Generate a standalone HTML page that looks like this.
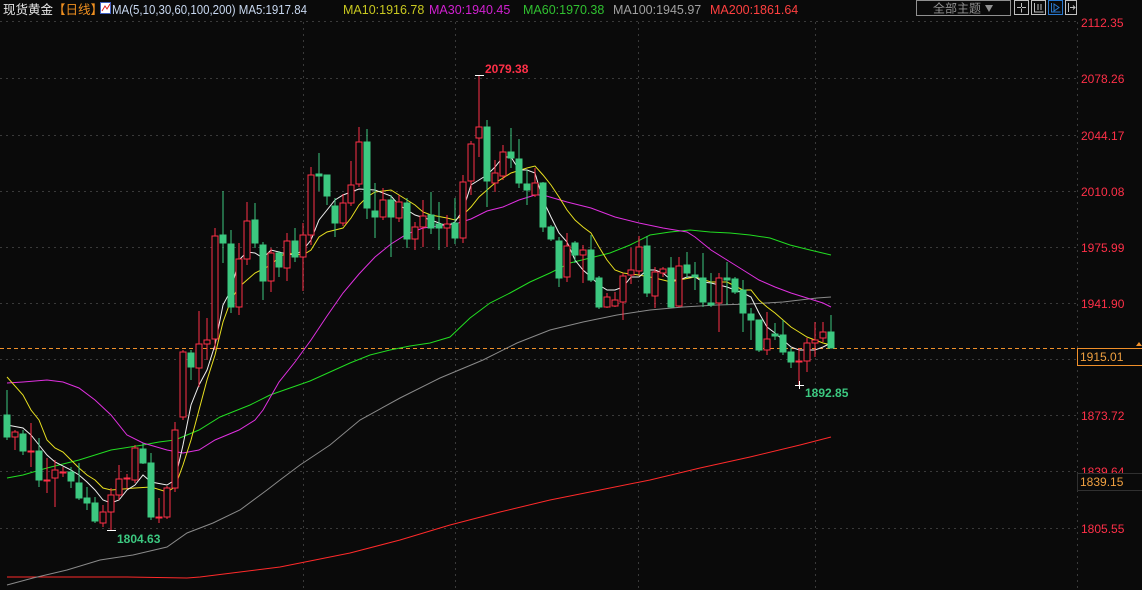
<!DOCTYPE html>
<html><head><meta charset="utf-8"><style>
html,body{margin:0;padding:0;background:#0a0a0a;width:1142px;height:590px;overflow:hidden}
svg{position:absolute;left:0;top:0}
text{font-family:"Liberation Sans","Noto Sans CJK SC",sans-serif}
</style></head><body>
<svg width="1142" height="590" viewBox="0 0 1142 590" xmlns="http://www.w3.org/2000/svg">
<rect width="1142" height="590" fill="#0a0a0a"/>
<g stroke="#3a3a3a" stroke-width="1" stroke-dasharray="2,4">
<line x1="0" y1="21.5" x2="1077" y2="21.5"/>
<line x1="0" y1="78.5" x2="1077" y2="78.5"/>
<line x1="0" y1="135.5" x2="1077" y2="135.5"/>
<line x1="0" y1="191.5" x2="1077" y2="191.5"/>
<line x1="0" y1="247.5" x2="1077" y2="247.5"/>
<line x1="0" y1="303.5" x2="1077" y2="303.5"/>
<line x1="0" y1="359.5" x2="1077" y2="359.5"/>
<line x1="0" y1="415.5" x2="1077" y2="415.5"/>
<line x1="0" y1="471.5" x2="1077" y2="471.5"/>
<line x1="0" y1="528.5" x2="1077" y2="528.5"/>
<line x1="303.5" y1="22" x2="303.5" y2="590"/>
<line x1="455.5" y1="22" x2="455.5" y2="590"/>
<line x1="638.5" y1="22" x2="638.5" y2="590"/>
<line x1="815.5" y1="22" x2="815.5" y2="590"/>
<line x1="1077.5" y1="22" x2="1077.5" y2="590"/>
</g>
<line x1="0" y1="348.5" x2="1077" y2="348.5" stroke="#f0902a" stroke-width="1" stroke-dasharray="4,3"/>
<g fill="none" stroke-width="1">
<polyline stroke="#ff2a2a" points="7,577 125,577 187,578 200,577 240,572 280,567 300,563 350,553 400,540 450,525 500,512 550,500 600,490 650,480 700,468 750,457 800,445 831,437"/>
<polyline stroke="#8a8a8a" points="7,585 33,578 67,570 100,560 133,555 167,547 187,533 213,523 240,510 267,490 280,480 300,465 330,445 360,420 400,398 440,378 483,360 517,343 550,330 583,322 617,315 650,310 683,307 717,305 750,304 783,302 817,298 831,297"/>
<polyline stroke="#22dd22" points="7,478 23,475 47,468 79,460 111,450 143,445 159,442 175,440 199,430 220,417 250,405 270,395 290,388 310,381 330,372 350,363 370,355 390,350 410,346 430,343 450,337 470,318 490,303 510,293 530,282 550,273 570,263 590,258 610,253 630,245 650,235 670,232 690,230 710,232 730,233 750,235 770,238 790,245 810,250 831,255"/>
<polyline stroke="#e030e0" points="7,383 23,382 47,380 63,382 79,388 95,400 111,415 127,435 143,443 167,450 183,453 199,450 215,440 239,430 255,420 263,410 279,382 295,362 311,340 327,316 343,293 359,274 375,257 391,244 407,234 423,228 439,226 455,224 471,219 487,211 503,207 519,200 535,195 543,195 567,202 591,208 615,217 639,223 663,228 687,232 695,237 711,250 727,260 743,270 759,280 775,287 791,293 807,298 823,303 831,307"/>
<polyline stroke="#e8e020" points="7,377 23,395 31,410 39,420 47,440 55,448 63,452 71,460 79,468 87,475 95,480 103,488 111,490 135,488 151,487 167,492 175,487 183,465 191,440 199,410 207,380 215,355 223,322 231,300 239,287 247,280 255,273 271,265 279,257 287,253 303,255 311,250 319,237 327,232 343,228 351,218 359,205 367,197 375,192 391,190 399,195 407,200 415,205 423,212 431,215 447,218 455,220 463,215 471,207 479,197 487,190 495,183 511,173 527,168 535,166 543,175 551,185 559,197 567,210 575,220 583,227 591,233 599,247 607,260 615,270 623,273 639,275 655,278 671,282 679,280 695,277 711,282 727,282 743,290 751,290 759,300 767,307 775,313 783,320 791,327 799,332 807,337 815,340 823,343 831,345"/>
<polyline stroke="#f0f0f0" points="7,425 23,428 31,435 39,445 47,455 55,462 71,470 79,475 87,482 95,490 103,500 111,503 119,500 127,490 135,485 143,475 151,482 167,485 175,480 183,445 191,405 199,385 207,370 215,345 223,305 231,290 239,260 247,252 255,253 263,258 271,250 287,254 295,255 303,250 311,240 319,220 327,210 335,200 343,195 359,189 375,190 391,196 399,205 407,210 415,215 431,220 447,226 455,222 463,210 471,185 479,180 487,175 495,167 503,157 511,157 519,170 527,170 535,173 543,200 551,217 559,233 567,242 575,260 583,270 591,277 599,285 607,290 615,290 623,287 631,277 639,277 647,270 655,270 663,273 671,280 679,280 687,277 695,277 703,282 711,283 719,285 727,287 735,290 743,293 751,297 759,313 767,327 775,333 783,340 791,347 799,350 815,350 823,347 831,343"/>
</g>
<g stroke="#ff3048" fill="#0a0a0a" stroke-width="1" shape-rendering="crispEdges">
<line x1="15" y1="430" x2="15" y2="450"/><rect x="12" y="432" width="6" height="5"/>
<line x1="31" y1="423" x2="31" y2="467"/><rect x="28" y="451" width="6" height="1"/>
<line x1="47" y1="458" x2="47" y2="493"/><rect x="44" y="480" width="6" height="1"/>
<line x1="55" y1="460" x2="55" y2="507"/><rect x="52" y="470" width="6" height="8"/>
<line x1="63" y1="467" x2="63" y2="477"/><rect x="60" y="472" width="6" height="1"/>
<line x1="103" y1="505" x2="103" y2="527"/><rect x="100" y="512" width="6" height="11"/>
<line x1="111" y1="488" x2="111" y2="530"/><rect x="108" y="495" width="6" height="17"/>
<line x1="119" y1="465" x2="119" y2="500"/><rect x="116" y="479" width="6" height="16"/>
<line x1="127" y1="474" x2="127" y2="489"/><rect x="124" y="478" width="6" height="1"/>
<line x1="135" y1="445" x2="135" y2="483"/><rect x="132" y="448" width="6" height="32"/>
<line x1="159" y1="498" x2="159" y2="523"/><rect x="156" y="517" width="6" height="1"/>
<line x1="167" y1="486" x2="167" y2="519"/><rect x="164" y="488" width="6" height="29"/>
<line x1="175" y1="422" x2="175" y2="492"/><rect x="172" y="430" width="6" height="58"/>
<line x1="183" y1="350" x2="183" y2="420"/><rect x="180" y="352" width="6" height="65"/>
<line x1="199" y1="311" x2="199" y2="387"/><rect x="196" y="344" width="6" height="24"/>
<line x1="207" y1="318" x2="207" y2="360"/><rect x="204" y="340" width="6" height="4"/>
<line x1="215" y1="228" x2="215" y2="350"/><rect x="212" y="236" width="6" height="103"/>
<line x1="239" y1="243" x2="239" y2="315"/><rect x="236" y="259" width="6" height="48"/>
<line x1="247" y1="202" x2="247" y2="265"/><rect x="244" y="221" width="6" height="38"/>
<line x1="271" y1="248" x2="271" y2="292"/><rect x="268" y="253" width="6" height="28"/>
<line x1="287" y1="233" x2="287" y2="281"/><rect x="284" y="241" width="6" height="27"/>
<line x1="303" y1="223" x2="303" y2="291"/><rect x="300" y="235" width="6" height="22"/>
<line x1="311" y1="167" x2="311" y2="245"/><rect x="308" y="175" width="6" height="60"/>
<line x1="343" y1="194" x2="343" y2="226"/><rect x="340" y="203" width="6" height="20"/>
<line x1="351" y1="161" x2="351" y2="206"/><rect x="348" y="185" width="6" height="18"/>
<line x1="359" y1="127" x2="359" y2="187"/><rect x="356" y="142" width="6" height="42"/>
<line x1="383" y1="188" x2="383" y2="220"/><rect x="380" y="200" width="6" height="17"/>
<line x1="399" y1="195" x2="399" y2="222"/><rect x="396" y="202" width="6" height="16"/>
<line x1="415" y1="222" x2="415" y2="250"/><rect x="412" y="227" width="6" height="12"/>
<line x1="423" y1="200" x2="423" y2="247"/><rect x="420" y="216" width="6" height="11"/>
<line x1="447" y1="215" x2="447" y2="247"/><rect x="444" y="224" width="6" height="4"/>
<line x1="463" y1="175" x2="463" y2="243"/><rect x="460" y="182" width="6" height="56"/>
<line x1="471" y1="141" x2="471" y2="195"/><rect x="468" y="144" width="6" height="37"/>
<line x1="479" y1="75" x2="479" y2="157"/><rect x="476" y="127" width="6" height="11"/>
<line x1="495" y1="160" x2="495" y2="192"/><rect x="492" y="173" width="6" height="10"/>
<line x1="503" y1="145" x2="503" y2="180"/><rect x="500" y="152" width="6" height="24"/>
<line x1="535" y1="168" x2="535" y2="197"/><rect x="532" y="183" width="6" height="12"/>
<line x1="567" y1="233" x2="567" y2="282"/><rect x="564" y="246" width="6" height="31"/>
<line x1="583" y1="245" x2="583" y2="283"/><rect x="580" y="250" width="6" height="5"/>
<line x1="607" y1="293" x2="607" y2="308"/><rect x="604" y="297" width="6" height="10"/>
<line x1="615" y1="292" x2="615" y2="307"/><rect x="612" y="300" width="6" height="6"/>
<line x1="623" y1="273" x2="623" y2="320"/><rect x="620" y="276" width="6" height="26"/>
<line x1="631" y1="248" x2="631" y2="284"/><rect x="628" y="270" width="6" height="5"/>
<line x1="639" y1="236" x2="639" y2="275"/><rect x="636" y="247" width="6" height="24"/>
<line x1="655" y1="267" x2="655" y2="308"/><rect x="652" y="272" width="6" height="24"/>
<line x1="663" y1="267" x2="663" y2="277"/><rect x="660" y="269" width="6" height="4"/>
<line x1="679" y1="257" x2="679" y2="307"/><rect x="676" y="266" width="6" height="40"/>
<line x1="719" y1="273" x2="719" y2="332"/><rect x="716" y="278" width="6" height="25"/>
<line x1="767" y1="312" x2="767" y2="355"/><rect x="764" y="339" width="6" height="11"/>
<line x1="799" y1="348" x2="799" y2="385"/><rect x="796" y="361" width="6" height="1"/>
<line x1="807" y1="338" x2="807" y2="372"/><rect x="804" y="343" width="6" height="18"/>
<line x1="815" y1="322" x2="815" y2="357"/><rect x="812" y="340" width="6" height="3"/>
<line x1="823" y1="322" x2="823" y2="342"/><rect x="820" y="332" width="6" height="6"/>
</g>
<g stroke="#3cc880" fill="#3cc880" stroke-width="1" shape-rendering="crispEdges">
<line x1="7" y1="390" x2="7" y2="440"/><rect x="4" y="415" width="6" height="22"/>
<line x1="23" y1="430" x2="23" y2="455"/><rect x="20" y="434" width="6" height="17"/>
<line x1="39" y1="438" x2="39" y2="487"/><rect x="36" y="451" width="6" height="29"/>
<line x1="71" y1="467" x2="71" y2="488"/><rect x="68" y="472" width="6" height="9"/>
<line x1="79" y1="463" x2="79" y2="500"/><rect x="76" y="483" width="6" height="15"/>
<line x1="87" y1="487" x2="87" y2="510"/><rect x="84" y="498" width="6" height="5"/>
<line x1="95" y1="497" x2="95" y2="523"/><rect x="92" y="503" width="6" height="18"/>
<line x1="143" y1="443" x2="143" y2="464"/><rect x="140" y="449" width="6" height="14"/>
<line x1="151" y1="453" x2="151" y2="520"/><rect x="148" y="463" width="6" height="54"/>
<line x1="191" y1="350" x2="191" y2="380"/><rect x="188" y="353" width="6" height="14"/>
<line x1="223" y1="191" x2="223" y2="263"/><rect x="220" y="235" width="6" height="8"/>
<line x1="231" y1="230" x2="231" y2="313"/><rect x="228" y="244" width="6" height="63"/>
<line x1="255" y1="203" x2="255" y2="248"/><rect x="252" y="220" width="6" height="23"/>
<line x1="263" y1="242" x2="263" y2="300"/><rect x="260" y="245" width="6" height="36"/>
<line x1="279" y1="251" x2="279" y2="277"/><rect x="276" y="253" width="6" height="14"/>
<line x1="295" y1="228" x2="295" y2="262"/><rect x="292" y="241" width="6" height="16"/>
<line x1="319" y1="153" x2="319" y2="191"/><rect x="316" y="174" width="6" height="2"/>
<line x1="327" y1="175" x2="327" y2="205"/><rect x="324" y="175" width="6" height="21"/>
<line x1="335" y1="198" x2="335" y2="237"/><rect x="332" y="206" width="6" height="17"/>
<line x1="367" y1="129" x2="367" y2="219"/><rect x="364" y="142" width="6" height="66"/>
<line x1="375" y1="183" x2="375" y2="238"/><rect x="372" y="211" width="6" height="6"/>
<line x1="391" y1="195" x2="391" y2="257"/><rect x="388" y="200" width="6" height="17"/>
<line x1="407" y1="198" x2="407" y2="248"/><rect x="404" y="203" width="6" height="36"/>
<line x1="431" y1="192" x2="431" y2="234"/><rect x="428" y="215" width="6" height="13"/>
<line x1="439" y1="202" x2="439" y2="250"/><rect x="436" y="224" width="6" height="4"/>
<line x1="455" y1="198" x2="455" y2="244"/><rect x="452" y="223" width="6" height="15"/>
<line x1="487" y1="120" x2="487" y2="207"/><rect x="484" y="127" width="6" height="54"/>
<line x1="511" y1="128" x2="511" y2="168"/><rect x="508" y="152" width="6" height="6"/>
<line x1="519" y1="139" x2="519" y2="188"/><rect x="516" y="159" width="6" height="24"/>
<line x1="527" y1="170" x2="527" y2="205"/><rect x="524" y="184" width="6" height="6"/>
<line x1="543" y1="182" x2="543" y2="232"/><rect x="540" y="183" width="6" height="44"/>
<line x1="551" y1="225" x2="551" y2="241"/><rect x="548" y="227" width="6" height="12"/>
<line x1="559" y1="237" x2="559" y2="287"/><rect x="556" y="241" width="6" height="37"/>
<line x1="575" y1="241" x2="575" y2="263"/><rect x="572" y="243" width="6" height="12"/>
<line x1="591" y1="235" x2="591" y2="282"/><rect x="588" y="250" width="6" height="30"/>
<line x1="599" y1="276" x2="599" y2="309"/><rect x="596" y="278" width="6" height="29"/>
<line x1="647" y1="236" x2="647" y2="297"/><rect x="644" y="246" width="6" height="47"/>
<line x1="671" y1="257" x2="671" y2="308"/><rect x="668" y="268" width="6" height="39"/>
<line x1="687" y1="252" x2="687" y2="278"/><rect x="684" y="265" width="6" height="8"/>
<line x1="695" y1="262" x2="695" y2="290"/><rect x="692" y="275" width="6" height="2"/>
<line x1="703" y1="253" x2="703" y2="307"/><rect x="700" y="278" width="6" height="24"/>
<line x1="711" y1="273" x2="711" y2="307"/><rect x="708" y="303" width="6" height="2"/>
<line x1="727" y1="262" x2="727" y2="305"/><rect x="724" y="278" width="6" height="2"/>
<line x1="735" y1="277" x2="735" y2="294"/><rect x="732" y="279" width="6" height="13"/>
<line x1="743" y1="280" x2="743" y2="332"/><rect x="740" y="290" width="6" height="23"/>
<line x1="751" y1="308" x2="751" y2="340"/><rect x="748" y="314" width="6" height="6"/>
<line x1="759" y1="320" x2="759" y2="352"/><rect x="756" y="320" width="6" height="30"/>
<line x1="775" y1="323" x2="775" y2="340"/><rect x="772" y="334" width="6" height="2"/>
<line x1="783" y1="320" x2="783" y2="355"/><rect x="780" y="335" width="6" height="17"/>
<line x1="791" y1="348" x2="791" y2="368"/><rect x="788" y="352" width="6" height="10"/>
<line x1="831" y1="315" x2="831" y2="348"/><rect x="828" y="332" width="6" height="16"/>
</g>
<g stroke="#ffffff" stroke-width="1">
<line x1="475" y1="75.5" x2="484" y2="75.5"/>
<line x1="795" y1="385.5" x2="804" y2="385.5"/><line x1="799.5" y1="381" x2="799.5" y2="389"/>
<line x1="107" y1="530.5" x2="116" y2="530.5"/>
</g>
<text x="485" y="73" font-size="12" font-weight="bold" fill="#ff3048">2079.38</text>
<text x="805" y="397" font-size="12" font-weight="bold" fill="#3cc880">1892.85</text>
<text x="117" y="543" font-size="12" font-weight="bold" fill="#3cc880">1804.63</text>
<g font-size="12" fill="#ff3048">
<text x="1081" y="27">2112.35</text>
<text x="1081" y="83">2078.26</text>
<text x="1081" y="140">2044.17</text>
<text x="1081" y="196">2010.08</text>
<text x="1081" y="252">1975.99</text>
<text x="1081" y="308">1941.90</text>
<text x="1081" y="420">1873.72</text>
<text x="1081" y="476">1839.64</text>
<text x="1081" y="533">1805.55</text>
</g>
<rect x="1077.5" y="348.5" width="66" height="17" fill="#0a0a0a" stroke="#f0902a"/>
<text x="1080" y="361" font-size="12" fill="#f0a040">1915.01</text>
<path d="M1136,346 l3,-4 l3,4 z" fill="#f0902a"/>
<rect x="1077.5" y="473.5" width="66" height="17" fill="#0a0a0a" stroke="#303030"/>
<text x="1080" y="486" font-size="12" fill="#f0a040">1839.15</text>
<g font-size="12.5">
<text x="3" y="14" fill="#e8e8e8">现货黄金<tspan fill="#f09020">【日线】</tspan></text>
<rect x="100.5" y="2.5" width="10" height="11" fill="#ffffff" stroke="#4060c0"/>
<polyline points="102,11 105,6 107,9 110,4" fill="none" stroke="#e02020" stroke-width="1"/>
<text x="112" y="14" fill="#c8d8f0" textLength="195" lengthAdjust="spacingAndGlyphs">MA(5,10,30,60,100,200) MA5:1917.84</text>
<text x="343" y="14" fill="#c8c820">MA10:1916.78</text>
<text x="429" y="14" fill="#d020d0">MA30:1940.45</text>
<text x="523" y="14" fill="#30c030">MA60:1970.38</text>
<text x="613" y="14" fill="#a0a0a0">MA100:1945.97</text>
<text x="710" y="14" fill="#ff4040">MA200:1861.64</text>
</g>
<rect x="916.5" y="0.5" width="94" height="15" fill="#0a0a0a" stroke="#909090"/>
<text x="933" y="12.5" font-size="12" fill="#909090">全部主题</text>
<path d="M985,5 l8,0 l-4,7 z" fill="#909090"/>
<g fill="none" stroke="#c0c0c0">
<rect x="1014.5" y="0.5" width="14" height="14"/>
<path d="M1021.5,3 v4 M1021.5,8.5 v4 M1017,7.5 h4 M1022,7.5 h4"/>
<rect x="1031.5" y="0.5" width="14" height="14"/>
<path d="M1034.5,3 v9 h9 M1038,4 v6 M1041,4 v6"/>
<rect x="1048.5" y="0.5" width="14" height="14" stroke="#2a7ad0"/>
<path d="M1051.5,3 v9 h9 M1054,4 l5,3.5 l-5,3.5 z" stroke="#2a7ad0"/>
<rect x="1065.5" y="0.5" width="11" height="14"/>
<path d="M1068.5,3 v9 M1070,7.5 h5 M1073,5.5 l2,2 l-2,2"/>
</g>
</svg>
</body></html>
